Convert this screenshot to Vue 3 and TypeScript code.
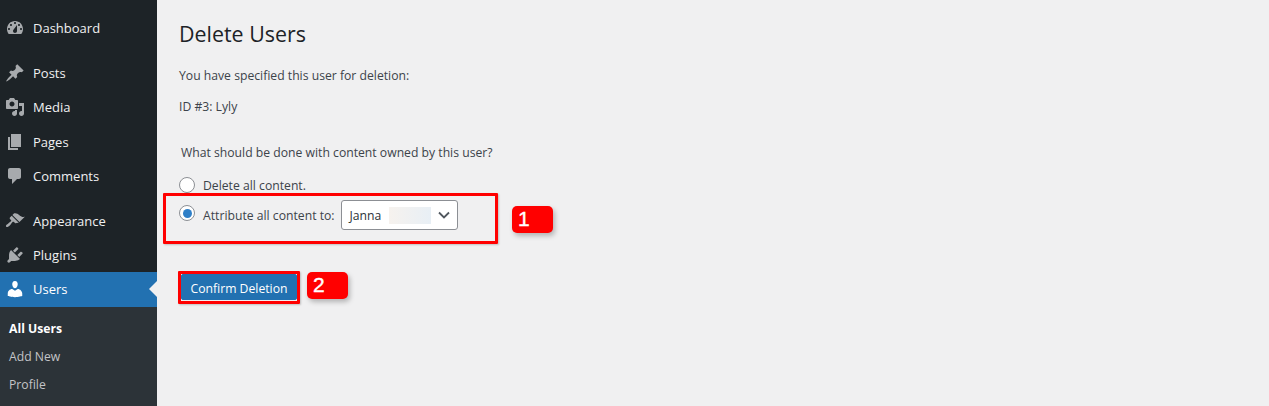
<script setup lang="ts">
type MenuItem = { label: string; d: string; active?: boolean; gapBefore?: boolean }

const menu: MenuItem[] = [
  { label: 'Dashboard', d: 'M3.76 16h12.48c1.1-1.37 1.76-3.11 1.76-5 0-4.42-3.58-8-8-8s-8 3.58-8 8c0 1.89.66 3.63 1.76 5zM10 4c.55 0 1 .45 1 1s-.45 1-1 1-1-.45-1-1 .45-1 1-1zM6 6c.55 0 1 .45 1 1s-.45 1-1 1-1-.45-1-1 .45-1 1-1zm8 0c.55 0 1 .45 1 1s-.45 1-1 1-1-.45-1-1 .45-1 1-1zm-5.37 5.55L12 7v6c0 1.1-.9 2-2 2s-2-.9-2-2c0-.57.24-1.08.63-1.45zM4 10c.55 0 1 .45 1 1s-.45 1-1 1-1-.45-1-1 .45-1 1-1zm12 0c.55 0 1 .45 1 1s-.45 1-1 1-1-.45-1-1 .45-1 1-1z' },
  { label: 'Posts', gapBefore: true, d: 'M10.44 3.02l1.82-1.82 6.36 6.35-1.83 1.82c-1.05-.68-2.48-.57-3.41.36l-.75.75c-.92.93-1.04 2.35-.35 3.41l-1.83 1.82-2.41-2.41-2.8 2.79c-.42.42-3.38 2.71-3.8 2.29s1.86-3.39 2.28-3.81l2.79-2.79L4.1 9.36l1.83-1.82c1.05.69 2.48.57 3.4-.36l.75-.75c.93-.92 1.05-2.35.36-3.41z' },
  { label: 'Media', d: 'M13 11V4c0-.55-.45-1-1-1h-1.67L9 1H5L3.67 3H2c-.55 0-1 .45-1 1v7c0 .55.45 1 1 1h10c.55 0 1-.45 1-1zM7 4.5c1.38 0 2.5 1.12 2.5 2.5S8.38 9.5 7 9.5 4.5 8.38 4.5 7 5.62 4.5 7 4.5zM14 6h5v10.5c0 1.38-1.12 2.5-2.5 2.5S14 17.88 14 16.5s1.12-2.5 2.5-2.5c.17 0 .34.02.5.05V9h-3V6zm-4 8.05V13h2v3.5c0 1.38-1.12 2.5-2.5 2.5S7 17.88 7 16.5 8.12 14 9.5 14c.17 0 .34.02.5.05z' },
  { label: 'Pages', d: 'M6 15V2h10v13H6zm-1 1h8v2H3V5h2v11z' },
  { label: 'Comments', d: 'M5 2h9c1.1 0 2 .9 2 2v7c0 1.1-.9 2-2 2h-2l-5 5v-5H5c-1.1 0-2-.9-2-2V4c0-1.1.9-2 2-2z' },
  { label: 'Appearance', gapBefore: true, d: 'M14.48 11.06L7.41 3.99l1.5-1.5c.5-.56 2.3-.47 3.51.32 1.21.8 1.43 1.28 2.91 2.1 1.18.64 2.45 1.26 4.45.85zm-.71.71L6.7 4.7 4.93 6.47c-.39.39-.39 1.02 0 1.41l1.06 1.06c.39.39.39 1.03 0 1.42-.6.6-1.43 1.11-2.21 1.69-.35.26-.7.53-1.01.84C1.43 13.23.4 14.91 1.2 15.7c.8.79 2.48-.22 3.8-1.56.31-.31.58-.66.84-1.01.58-.78 1.09-1.61 1.69-2.21.39-.39 1.02-.39 1.41 0l1.06 1.06c.39.39 1.02.39 1.41 0z' },
  { label: 'Plugins', d: 'M13.11 4.36L9.87 7.6 8 5.73l3.24-3.24c.35-.34 1.05-.2 1.56.32.52.51.66 1.21.31 1.55zm-8 1.77l.91-1.12 9.01 9.01-1.19.84c-.71.71-2.63 1.16-3.82 1.16H6.14L4.9 17.26c-.59.59-1.54.59-2.12 0-.59-.58-.59-1.53 0-2.12l1.24-1.24v-3.88c0-1.13.4-3.19 1.09-3.89zm7.26 3.97l3.24-3.24c.34-.35 1.04-.21 1.55.31.52.51.66 1.21.31 1.55l-3.24 3.25z' },
  { label: 'Users', active: true, d: 'M10 9.25c-2.27 0-2.73-3.44-2.73-3.44C7 4.02 7.82 2 9.97 2c2.16 0 2.98 2.02 2.71 3.81 0 0-.41 3.44-2.68 3.44zm0 2.57L12.72 10c2.39 0 4.52 2.33 4.52 4.53v2.49s-3.65 1.13-7.24 1.13c-3.65 0-7.24-1.13-7.24-1.13v-2.49c0-2.25 1.94-4.48 4.47-4.48z' },
]

const submenu = ['All Users', 'Add New', 'Profile']
</script>

<template>
  <div class="page">
    <aside class="sidebar">
      <nav class="menu">
        <a
          v-for="item in menu"
          :key="item.label"
          class="menu-item"
          :class="{ active: item.active, gap: item.gapBefore }"
        >
          <svg class="menu-icon" viewBox="0 0 20 20" width="20" height="20"><path :d="item.d" /></svg>
          <span>{{ item.label }}</span>
        </a>
      </nav>
      <ul class="submenu">
        <li v-for="(s, i) in submenu" :key="s" :class="{ current: i === 0 }">{{ s }}</li>
      </ul>
    </aside>

    <main class="content">
      <h1>Delete Users</h1>
      <p class="spec">You have specified this user for deletion:</p>
      <p class="id">ID #3: Lyly</p>
      <fieldset>
        <p class="legend">What should be done with content owned by this user?</p>
        <label class="choice first">
          <span class="radio"></span>
          Delete all content.
        </label>
        <label class="choice second">
          <span class="radio on"></span>
          Attribute all content to:
          <span class="select">
            <span>Janna</span>
            <i class="blur"></i>
            <svg class="chev" viewBox="0 0 12 8" width="12" height="8"><path d="M1 1.5l5 5 5-5" /></svg>
          </span>
        </label>
      </fieldset>
      <button class="confirm" type="button">Confirm Deletion</button>

      <!-- annotations drawn on top of the screenshot -->
      <div class="mark mark-select"></div>
      <div class="mark mark-button"></div>
      <div class="badge badge-1">1</div>
      <div class="badge badge-2">2</div>
    </main>
  </div>
</template>

<style>
html, body {
  margin: 0;
  background: #f0f0f1;
}
</style>

<style scoped>
.page {
  display: flex;
  width: 1269px;
  height: 406px;
  overflow: hidden;
  font-family: "Open Sans", "Liberation Sans", sans-serif;
  font-size: 12.2px;
  color: #3c434a;
}

.sidebar {
  width: 157px;
  flex: none;
  background: #1d2327;
  display: flex;
  flex-direction: column;
}

.menu {
  padding-top: 11px;
}

.menu-item {
  display: flex;
  align-items: center;
  height: 34.4px;
  padding-left: 5px;
  color: #f0f0f1;
  font-size: 13px;
  position: relative;
}

.menu-item.gap {
  margin-top: 10.2px;
}

.menu-item span {
  margin-left: 8px;
}

.menu-icon {
  fill: #a7aaad;
  flex: none;
}

.menu-item.active {
  background: #2271b1;
  color: #fff;
}

.menu-item.active .menu-icon {
  fill: #fff;
}

.menu-item.active::after {
  content: "";
  position: absolute;
  right: 0;
  top: 50%;
  margin-top: -8px;
  border: 8px solid transparent;
  border-right-color: #f0f0f1;
  border-left-width: 0;
}

.submenu {
  flex: 1;
  list-style: none;
  margin: 0;
  padding: 8px 0 0 9px;
  background: #2c3338;
  color: #c3c4c7;
  font-size: 12.2px;
}

.submenu li {
  height: 28px;
  line-height: 28px;
}

.submenu li.current {
  color: #fff;
  font-weight: 700;
}

.content {
  flex: 1;
  padding-left: 22px;
  position: relative;
}

h1 {
  margin: 18px 0 0;
  font-size: 21.4px;
  font-weight: 400;
  line-height: 32px;
  color: #1d2327;
}

.spec {
  margin: 16px 0 0;
  line-height: 20px;
}

.id {
  margin: 11px 0 0;
  line-height: 20px;
}

fieldset {
  border: 0;
  margin: 0;
  padding: 0;
}

.legend {
  margin: 26px 0 0 2px;
  line-height: 20px;
}

.choice {
  display: flex;
  align-items: center;
  height: 20px;
}

.choice.first {
  margin-top: 12px;
}

.choice.second {
  margin-top: 5px;
  height: 30px;
}

.radio {
  width: 14px;
  height: 14px;
  border: 1px solid #8c8f94;
  border-radius: 50%;
  background: #fff;
  margin-right: 8px;
  flex: none;
  position: relative;
}

.radio.on {
  margin-top: -4px;
}

.radio.on::after {
  content: "";
  position: absolute;
  left: 2.5px;
  top: 2.5px;
  width: 9px;
  height: 9px;
  border-radius: 50%;
  background: #2f7fc7;
}

.select {
  margin-left: 6px;
  width: 107px;
  height: 28px;
  border: 1px solid #8c8f94;
  border-radius: 3px;
  background: #fff;
  color: #2c3338;
  display: flex;
  align-items: center;
  padding-left: 8px;
  box-sizing: content-box;
  position: relative;
}

.blur {
  position: absolute;
  left: 47px;
  top: 6px;
  width: 42px;
  height: 17px;
  background: linear-gradient(90deg, #f6f2ee, #e8eff5);
}

.chev {
  position: absolute;
  right: 7px;
  top: 10px;
  fill: none;
  stroke: #50575e;
  stroke-width: 1.8;
}

.confirm {
  display: block;
  margin: 44px 0 0 2px;
  width: 116px;
  height: 26px;
  padding: 2px 0 0;
  border: 1px solid #2271b1;
  border-radius: 2px;
  background: #2271b1;
  color: #fff;
  font: inherit;
}

.mark {
  position: absolute;
  border: 3px solid #f00;
  box-sizing: border-box;
  border-radius: 1px;
  box-shadow: 1px 1px 2px rgba(0, 0, 0, 0.2);
}

.mark-select {
  left: 6px;
  top: 193px;
  width: 335px;
  height: 51px;
}

.mark-button {
  left: 21px;
  top: 271px;
  width: 122px;
  height: 33px;
}

.badge {
  position: absolute;
  width: 41px;
  height: 27px;
  background: #f00;
  border-radius: 5px;
  color: #fff;
  font-family: "Liberation Sans", sans-serif;
  font-size: 21px;
  line-height: 25px;
  box-shadow: 2px 3px 5px rgba(0, 0, 0, 0.25);
  padding-left: 6px;
  box-sizing: border-box;
  -webkit-text-stroke: 0.4px #fff;
}

.badge-1 {
  left: 355px;
  top: 206px;
}

.badge-2 {
  left: 150px;
  top: 272px;
}
</style>
